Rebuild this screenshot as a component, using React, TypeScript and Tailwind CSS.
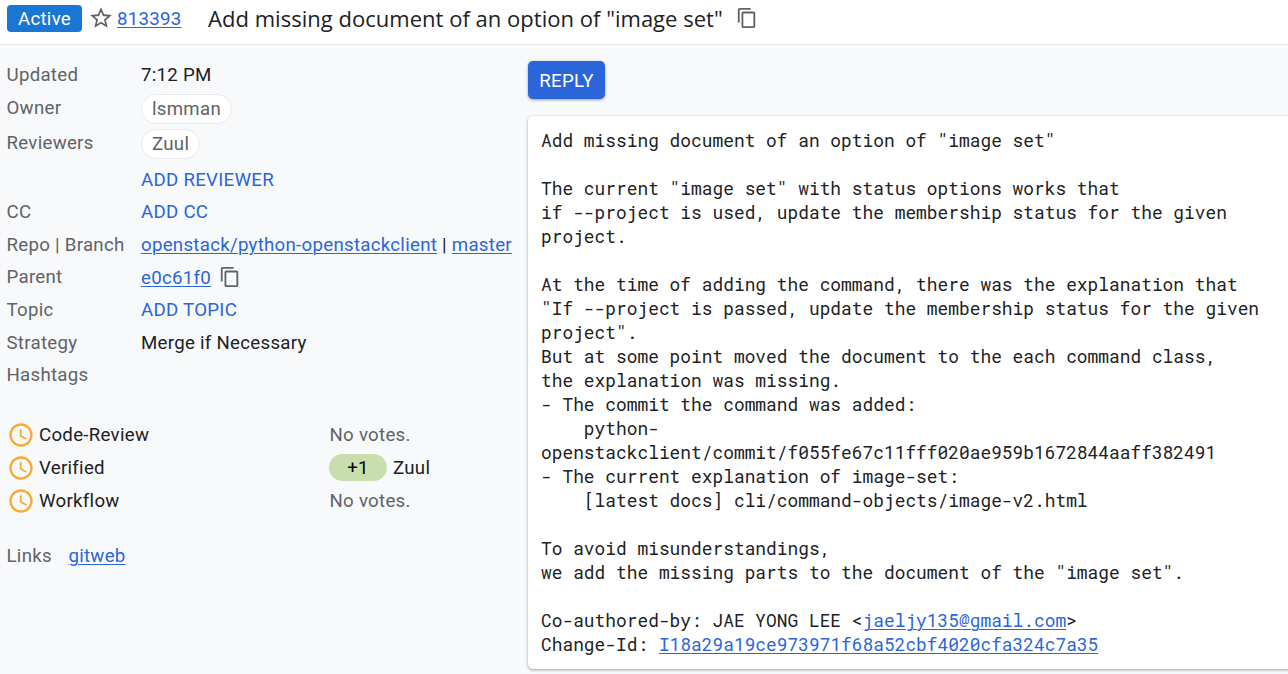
import type { ReactNode } from "react";

const link = "text-[#2a66d9] underline decoration-1 underline-offset-[1.5px]";

function CopyIcon({ className }: { className: string }) {
  return (
    <svg viewBox="0 0 24 24" className={className} fill="currentColor">
      <path d="M16 1H4c-1.1 0-2 .9-2 2v14h2V3h12V1zm3 4H8c-1.1 0-2 .9-2 2v14c0 1.1.9 2 2 2h11c1.1 0 2-.9 2-2V7c0-1.1-.9-2-2-2zm0 16H8V7h11v14z" />
    </svg>
  );
}

function StarIcon() {
  return (
    <svg viewBox="0 0 24 24" className="-mt-px ml-[6px] size-[26px] shrink-0 text-[#5f6368]" fill="currentColor">
      <path d="M22 9.24l-7.19-.62L12 2 9.19 8.63 2 9.24l5.46 4.73L5.82 21 12 17.27 18.18 21l-1.63-7.03L22 9.24zM12 15.4l-3.76 2.27 1-4.28-3.32-2.88 4.38-.38L12 6.1l1.71 4.04 4.38.38-3.32 2.88 1 4.28L12 15.4z" />
    </svg>
  );
}

function ClockIcon() {
  return (
    <svg viewBox="0 0 24 24" className="mr-[4.5px] size-[28px] shrink-0 text-[#ffa62f]" fill="currentColor">
      <path d="M11.99 2C6.47 2 2 6.48 2 12s4.47 10 9.99 10C17.52 22 22 17.52 22 12S17.52 2 11.99 2zM12 20c-4.42 0-8-3.58-8-8s3.58-8 8-8 8 3.58 8 8-3.58 8-8 8zm.5-13H11v6l5.25 3.15.75-1.23-4.5-2.67z" />
    </svg>
  );
}

function Chip({ children }: { children: ReactNode }) {
  return (
    <span className="mt-px inline-flex h-[30px] items-center rounded-full border border-[#e8eaed] bg-white px-[10px] text-[#5f6368]">
      {children}
    </span>
  );
}

function Row({ label, height, children }: { label: string; height: string; children?: ReactNode }) {
  return (
    <div className={`flex items-start whitespace-pre leading-[30px] ${height}`}>
      <div className="w-[134.5px] shrink-0 text-[#5f6368]">{label}</div>
      <div className="flex items-start">{children}</div>
    </div>
  );
}

function Vote({ label, children }: { label: string; children: ReactNode }) {
  return (
    <div className="flex h-[33px] items-center">
      <div className="flex w-[322.5px] items-center">
        <ClockIcon />
        <span className="pt-px">{label}</span>
      </div>
      <div className="flex items-center text-[#5f6368]">{children}</div>
    </div>
  );
}

const message = [
  'Add missing document of an option of "image set"',
  "",
  'The current "image set" with status options works that',
  "if --project is used, update the membership status for the given",
  "project.",
  "",
  "At the time of adding the command, there was the explanation that",
  '"If --project is passed, update the membership status for the given',
  'project".',
  "But at some point moved the document to the each command class,",
  "the explanation was missing.",
  "- The commit the command was added:",
  "    python-",
  "openstackclient/commit/f055fe67c11fff020ae959b1672844aaff382491",
  "- The current explanation of image-set:",
  "    [latest docs] cli/command-objects/image-v2.html",
  "",
  "To avoid misunderstandings,",
  'we add the missing parts to the document of the "image set".',
  "",
];

export default function App() {
  return (
    <div className="flex h-[674px] w-[1288px] flex-col overflow-hidden bg-[#f8f9fb] font-[Roboto,sans-serif] text-[18.67px] tracking-[0.28px] text-[#202124]">
      <header className="flex h-[45px] shrink-0 items-start border-b border-[#e4e6e9] bg-white">
        <div className="flex h-[37px] items-center">
          <span className="ml-[7px] flex h-[27px] w-[75px] items-center justify-center rounded-[4px] bg-[#1976d2] pt-px text-white">
            Active
          </span>
          <StarIcon />
          <a className={`ml-[3px] pt-px ${link}`}>813393</a>
          <h1 className="ml-[26.5px] whitespace-nowrap font-['Open_Sans',sans-serif] text-[22px] tracking-[0.02px]">
            Add missing document of an option of "image set"
          </h1>
          <CopyIcon className="-mt-[2px] ml-[13.5px] size-[22px] text-[#5f6368]" />
        </div>
      </header>
      <main className="flex grow">
        <section className="w-[528px] shrink-0 pl-[6.5px] pt-[15px]">
          <Row label="Updated" height="h-[33px]">7:12 PM</Row>
          <Row label="Owner" height="h-[35px]"><Chip>lsmman</Chip></Row>
          <Row label="Reviewers" height="h-[37px]"><Chip>Zuul</Chip></Row>
          <Row label="" height="h-[32px]"><a className="text-[#2a66d9]">ADD REVIEWER</a></Row>
          <Row label="CC" height="h-[33px]"><a className="text-[#2a66d9]">ADD CC</a></Row>
          <Row label="Repo | Branch" height="h-[32px]">
            <a className={link}>openstack/python-openstackclient</a> | <a className={link}>master</a>
          </Row>
          <Row label="Parent" height="h-[33px]">
            <a className={`pt-px ${link}`}>e0c61f0</a>
            <CopyIcon className="ml-[8px] mt-[4px] size-[22px] text-[#5f6368]" />
          </Row>
          <Row label="Topic" height="h-[33px]"><a className="text-[#2a66d9]">ADD TOPIC</a></Row>
          <Row label="Strategy" height="h-[32px]">Merge if Necessary</Row>
          <Row label="Hashtags" height="h-[58px]" />
          <Vote label="Code-Review"><span className="pl-[0.5px] pt-px">No votes.</span></Vote>
          <Vote label="Verified">
            <span className="mr-[6px] flex h-[27px] w-[58px] items-center justify-center rounded-full bg-[#c9deae] pt-px text-black">
              +1
            </span>
            <span className="pt-px text-[#202124]">Zuul</span>
          </Vote>
          <Vote label="Workflow"><span className="pl-[0.5px] pt-px">No votes.</span></Vote>
          <div className="mt-[24px] flex leading-[30px] text-[#5f6368]">
            Links
            <a className={`ml-[16.5px] ${link}`}>gitweb</a>
          </div>
        </section>
        <section className="flex grow flex-col items-start pt-[16px]">
          <button className="flex h-[38px] w-[77px] items-center justify-center rounded-[5px] bg-[#2a66d9] pt-px text-white shadow-[0_1px_3px_rgba(60,64,67,0.5)]">
            REPLY
          </button>
          <div className="mt-[17px] h-[553px] w-[790px] shrink-0 whitespace-pre rounded-[5px] bg-white px-[13px] pt-[12px] font-['Roboto_Mono','Liberation_Mono',monospace] text-[17.86px] leading-[24px] tracking-normal shadow-[0_1px_3px_rgba(60,64,67,0.5)]">
            {message.map((line, i) => (
              <div key={i} className="h-6">{line}</div>
            ))}
            <div className="flex h-6">
              <span>{"Co-authored-by: JAE YONG LEE <"}</span>
              <a className={link}>jaeljy135@gmail.com</a>
              <span>{">"}</span>
            </div>
            <div className="flex h-6">
              <span>{"Change-Id: "}</span>
              <a className={link}>I18a29a19ce973971f68a52cbf4020cfa324c7a35</a>
            </div>
          </div>
        </section>
      </main>
    </div>
  );
}
